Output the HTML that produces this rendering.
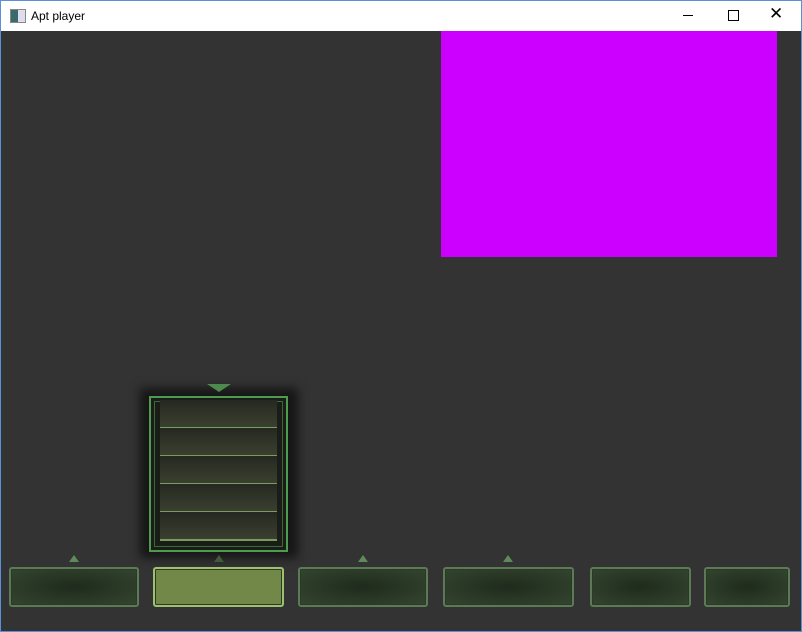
<!DOCTYPE html><html><head><style>
body{margin:0;width:802px;height:632px;overflow:hidden;background:#333;position:relative;font-family:"Liberation Sans",sans-serif}
.t{position:absolute;left:0;top:0;width:800px;height:30px;background:#fff;border:1px solid #5c8fd6;border-bottom:none}
.b{position:absolute;top:567px;height:40px;box-sizing:border-box;border:2px solid #5b7a55;border-radius:3px;background:radial-gradient(ellipse at center,#1f2b1d,#34452f);box-shadow:inset 0 0 0 1px #2a3a27}
.a{position:absolute;top:555px;width:0;height:0;border-left:5px solid transparent;border-right:5px solid transparent;border-bottom:7px solid #5f8a5a}
.r{position:absolute;left:160px;width:117px;height:27px;background:linear-gradient(#252820,#3a4030);border-bottom:2px solid #7a9a60}
</style></head><body>
<div class="t"><div style="position:absolute;left:9px;top:8px;width:14px;height:12px;border:1px solid #888;background:linear-gradient(90deg,#3a6a6a 50%,#dde 50%)"></div>
<div style="position:absolute;left:30px;top:8px;font-size:12px">Apt player</div>
<div style="position:absolute;left:682px;top:14px;width:10px;height:1px;background:#000"></div>
<div style="position:absolute;left:727px;top:9px;width:9px;height:9px;border:1px solid #000"></div>
<div style="position:absolute;left:768px;top:3px;font-size:17px">✕</div></div>
<div style="position:absolute;left:0;top:31px;width:1px;height:601px;background:#5c8fd6"></div>
<div style="position:absolute;right:0;top:31px;width:1px;height:601px;background:#5c8fd6"></div>
<div style="position:absolute;left:0;bottom:0;width:802px;height:1px;background:#5c8fd6"></div>
<div style="position:absolute;left:441px;top:31px;width:336px;height:226px;background:#cc00ff"></div>
<div style="position:absolute;left:140px;top:388px;width:158px;height:170px;background:#151515;filter:blur(5px)"></div>
<div style="position:absolute;left:149px;top:396px;width:135px;height:152px;border:2px solid #4e9a4e;background:#1a1c18"></div>
<div style="position:absolute;left:154px;top:401px;width:127px;height:144px;border:1px solid #3a6a3a"></div>
<div style="position:absolute;left:207px;top:384px;width:0;height:0;border-left:12px solid transparent;border-right:12px solid transparent;border-top:8px solid #4e8a4e"></div>
<div class="r" style="top:400px"></div><div class="r" style="top:428px"></div><div class="r" style="top:456px"></div><div class="r" style="top:484px"></div><div class="r" style="top:512px"></div>
<div class="a" style="left:69px"></div><div class="a" style="left:214px;border-bottom-color:#3f5a3c"></div><div class="a" style="left:358px"></div><div class="a" style="left:503px"></div>
<div class="b" style="left:9px;width:130px"></div>
<div class="b" style="left:153px;width:131px;background:#728848;border-color:#a0c070"></div>
<div class="b" style="left:298px;width:130px"></div>
<div class="b" style="left:443px;width:131px"></div>
<div class="b" style="left:590px;width:101px"></div>
<div class="b" style="left:704px;width:86px"></div>
</body></html>
